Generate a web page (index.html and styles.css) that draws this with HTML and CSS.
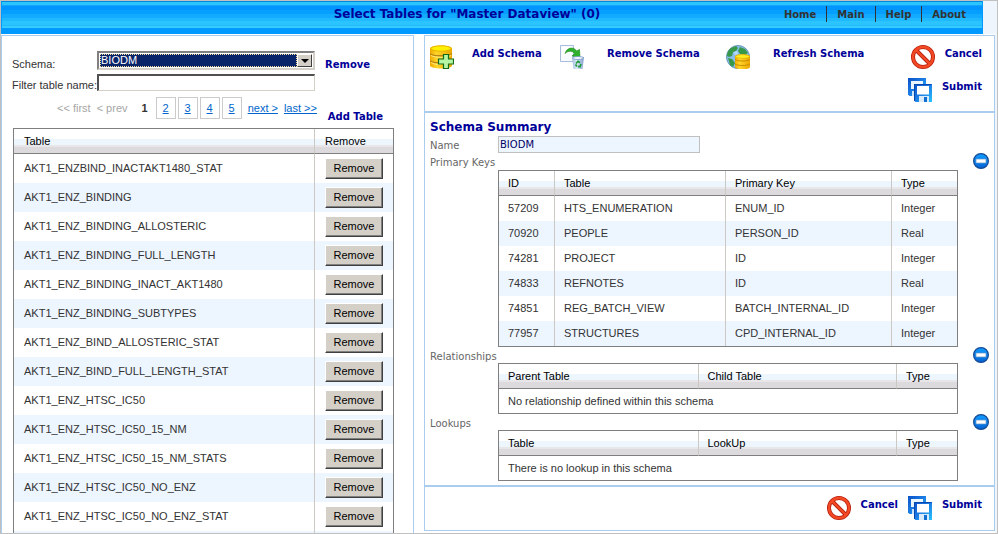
FILE: index.html
```html
<!DOCTYPE html>
<html lang="en">
<head>
<meta charset="utf-8">
<title>Select Tables</title>
<link rel="stylesheet" href="styles.css">
</head>
<body>
<svg class="defs" aria-hidden="true">
  <defs>
    <linearGradient id="gold" x1="0" x2="1" y1="0" y2="0"><stop offset="0" stop-color="#f0a800"/><stop offset=".3" stop-color="#ffd52a"/><stop offset="1" stop-color="#eda600"/></linearGradient>
    <linearGradient id="disk" x1="0" x2="1" y1="0" y2="1"><stop offset="0" stop-color="#0a50c8"/><stop offset=".5" stop-color="#1d7fe4"/><stop offset="1" stop-color="#29c4ff"/></linearGradient>
    <linearGradient id="blue" x1="0" x2="0" y1="0" y2="1"><stop offset="0" stop-color="#109bff"/><stop offset=".5" stop-color="#0a84ee"/><stop offset="1" stop-color="#0560d0"/></linearGradient>
    <linearGradient id="bin" x1="0" x2="1" y1="0" y2="0"><stop offset="0" stop-color="#9fbbe0"/><stop offset=".4" stop-color="#dce9f8"/><stop offset="1" stop-color="#7f9fd0"/></linearGradient>
    <symbol id="i-add" viewBox="0 0 24 24">
      <path d="M0 3.500C0 -.5 22 -.5 22 3.500V20.500C22 24.500 0 24.500 0 20.500Z" fill="url(#gold)"/>
      <ellipse cx="11" cy="3.500" rx="10" ry="2.700" fill="#fff000" stroke="#e8b400"/>
      <path d="M0 8.500C2 11.500 20 11.500 22 8.500M0 15.500C2 18.500 20 18.500 22 15.500" fill="none" stroke="#b98518" stroke-width="1.300"/>
      <path d="M1 10.500C5 13 17 13 21 10.500M1 17.500C5 20 9 19.500 11 19.500" fill="none" stroke="#ffe97a"/>
      <path d="M13.500 9.500h5v4.500h5v5h-5v4.500h-5V19h-5v-5h5z" fill="#b6f5a4" stroke="#146c17" stroke-width="1.200"/>
    </symbol>
    <symbol id="i-remove" viewBox="0 0 24 24">
      <path d="M.5.500h13v16H.5z" fill="#f7faff" stroke="#a8bcdc"/>
      <path d="M2 14V2h10z" fill="#fff"/>
      <path d="M5 8.500C7 2 14 1.500 16.500 6l3-1.500.500 8-8-1.500 2.500-2.500C12.500 5.500 8 5.500 5 8.500z" fill="#2fb12c" stroke="#168918" stroke-width=".6"/>
      <path d="M12 12h12l-1.500 12h-9z" fill="url(#bin)"/>
      <ellipse cx="18" cy="13" rx="5.700" ry="1.500" fill="#edf4fc" stroke="#7d99ca" stroke-width=".8"/>
      <path d="M16 18.500l2-2.200 2 1.500M21 19l-1 2.700h-2M17 21.500l-1.500-2" fill="none" stroke="#209838" stroke-width="1.700"/>
    </symbol>
    <symbol id="i-refresh" viewBox="0 0 24 24">
      <circle cx="12" cy="12" r="11.500" fill="#89bdea" stroke="#6796b4"/>
      <path d="M5 3l5-2 2 2-2 3-3 1-1 4-3 1-2-1c0-3 1-6 4-8zM14 2l5 2 3 4-3 2-5-1-2-3zM2 13l4 1 3 4-2 4-3-2z" fill="#38984a"/>
      <path d="M8 7l3-1 1 3-3 1z" fill="#b4dcf8"/>
      <path d="M9 11.500c0-3 15-3 15 0v10.500c0 3-15 3-15 0z" fill="url(#gold)"/>
      <ellipse cx="16.500" cy="11.500" rx="7" ry="1.800" fill="#ffef22" stroke="#e6b000" stroke-width=".7"/>
      <path d="M9 14.500c3 2 12 2 15 0M9 19c3 2 12 2 15 0" fill="none" stroke="#c68b00"/>
    </symbol>
    <symbol id="i-cancel" viewBox="0 0 24 24">
      <circle cx="12" cy="12" r="10" fill="#fff" stroke="#b51e0c" stroke-width="4"/>
      <path d="M5 5l14 14" stroke="#b51e0c" stroke-width="3.900"/>
      <circle cx="12" cy="12" r="10" fill="none" stroke="#f34a25" stroke-width="2.400"/>
      <path d="M5 5l14 14" stroke="#f34a25" stroke-width="2.300"/>
    </symbol>
    <symbol id="i-submit" viewBox="0 0 24 24">
      <path d="M0 0h18v18H1.500L0 16.500z" fill="url(#disk)"/>
      <path d="M3 3h12v8H3z" fill="#eaf6ff"/><path d="M4 13h5v5H4z" fill="#cbe4fa"/>
      <path d="M6 6h18v18H7.500L6 22.500z" fill="url(#disk)"/>
      <path d="M6.500 23V6.500h17" fill="none" stroke="#0747b0"/>
      <path d="M9 8h12v8.500H9z" fill="#fff"/><path d="M11 18h10v6H11z" fill="#d9eafa"/>
      <path d="M16 19h3v5h-3z" fill="#126fd2"/>
    </symbol>
    <symbol id="i-minus" viewBox="0 0 16 16">
      <circle cx="8" cy="8" r="7.400" fill="url(#blue)" stroke="#164a94" stroke-width="1.200"/>
      <path d="M3 6h10v4H3z" fill="#fff" stroke="#6494c8" stroke-width=".7"/>
    </symbol>
  </defs>
</svg>

<div class="frame">
  <header class="banner">
    <h1>Select Tables for "Master Dataview" (0)</h1>
    <nav class="menu"><a href="#">Home</a><a href="#">Main</a><a href="#">Help</a><a href="#">About</a></nav>
  </header>

  <main class="columns">
    <section class="panel picker">
      <div class="form">
        <label for="schema">Schema:</label>
        <span class="drop"><select id="schema"><option>BIODM</option></select><span class="arrow"></span></span>
        <a class="action" href="#">Remove</a>
        <label for="filter">Filter table name:</label>
        <input id="filter" class="field" type="text">
      </div>
      <div class="paging">
        <nav class="pager">
          <span class="off">&lt;&lt; first</span><span class="off">&lt; prev</span><b>1</b>
          <span class="pages"><a href="#">2</a><a href="#">3</a><a href="#">4</a><a href="#">5</a></span>
          <a href="#">next &gt;</a><a href="#">last &gt;&gt;</a>
        </nav>
        <a class="action" href="#">Add Table</a>
      </div>
      <table class="grid tall">
        <colgroup><col><col class="c-remove"></colgroup>
        <thead><tr><th>Table</th><th>Remove</th></tr></thead>
        <tbody>
          <tr><td>AKT1_ENZBIND_INACTAKT1480_STAT</td><td><button>Remove</button></td></tr>
          <tr><td>AKT1_ENZ_BINDING</td><td><button>Remove</button></td></tr>
          <tr><td>AKT1_ENZ_BINDING_ALLOSTERIC</td><td><button>Remove</button></td></tr>
          <tr><td>AKT1_ENZ_BINDING_FULL_LENGTH</td><td><button>Remove</button></td></tr>
          <tr><td>AKT1_ENZ_BINDING_INACT_AKT1480</td><td><button>Remove</button></td></tr>
          <tr><td>AKT1_ENZ_BINDING_SUBTYPES</td><td><button>Remove</button></td></tr>
          <tr><td>AKT1_ENZ_BIND_ALLOSTERIC_STAT</td><td><button>Remove</button></td></tr>
          <tr><td>AKT1_ENZ_BIND_FULL_LENGTH_STAT</td><td><button>Remove</button></td></tr>
          <tr><td>AKT1_ENZ_HTSC_IC50</td><td><button>Remove</button></td></tr>
          <tr><td>AKT1_ENZ_HTSC_IC50_15_NM</td><td><button>Remove</button></td></tr>
          <tr><td>AKT1_ENZ_HTSC_IC50_15_NM_STATS</td><td><button>Remove</button></td></tr>
          <tr><td>AKT1_ENZ_HTSC_IC50_NO_ENZ</td><td><button>Remove</button></td></tr>
          <tr><td>AKT1_ENZ_HTSC_IC50_NO_ENZ_STAT</td><td><button>Remove</button></td></tr>
          <tr><td></td><td></td></tr>
        </tbody>
      </table>
    </section>

    <div class="detail">
      <section class="panel toolbar">
        <a class="action tool near" href="#"><svg><use href="#i-add"/></svg>Add Schema</a>
        <a class="action tool" href="#"><svg><use href="#i-remove"/></svg>Remove Schema</a>
        <a class="action tool" href="#"><svg><use href="#i-refresh"/></svg>Refresh Schema</a>
        <div class="confirm">
          <a class="action" href="#"><svg><use href="#i-cancel"/></svg>Cancel</a>
          <a class="action" href="#"><svg><use href="#i-submit"/></svg>Submit</a>
        </div>
      </section>

      <section class="panel summary">
        <h2>Schema Summary</h2>
        <div class="name"><label for="name">Name</label><input id="name" type="text" value="BIODM" readonly></div>

        <div class="bar"><h3>Primary Keys</h3><button class="fold" aria-label="Collapse primary keys"><svg><use href="#i-minus"/></svg></button></div>
        <div class="inset">
          <table class="grid">
            <colgroup><col class="k-id"><col><col class="k-key"><col class="k-type"></colgroup>
            <thead><tr><th>ID</th><th>Table</th><th>Primary Key</th><th>Type</th></tr></thead>
            <tbody>
              <tr><td>57209</td><td>HTS_ENUMERATION</td><td>ENUM_ID</td><td>Integer</td></tr>
              <tr><td>70920</td><td>PEOPLE</td><td>PERSON_ID</td><td>Real</td></tr>
              <tr><td>74281</td><td>PROJECT</td><td>ID</td><td>Integer</td></tr>
              <tr><td>74833</td><td>REFNOTES</td><td>ID</td><td>Real</td></tr>
              <tr><td>74851</td><td>REG_BATCH_VIEW</td><td>BATCH_INTERNAL_ID</td><td>Integer</td></tr>
              <tr><td>77957</td><td>STRUCTURES</td><td>CPD_INTERNAL_ID</td><td>Integer</td></tr>
            </tbody>
          </table>
        </div>

        <div class="bar"><h3>Relationships</h3><button class="fold" aria-label="Collapse relationships"><svg><use href="#i-minus"/></svg></button></div>
        <div class="inset">
          <table class="grid empty">
            <colgroup><col><col><col class="r-type"></colgroup>
            <thead><tr><th>Parent Table</th><th>Child Table</th><th>Type</th></tr></thead>
            <tbody><tr><td colspan="3">No relationship defined within this schema</td></tr></tbody>
          </table>
        </div>

        <div class="bar"><h3>Lookups</h3><button class="fold" aria-label="Collapse lookups"><svg><use href="#i-minus"/></svg></button></div>
        <div class="inset">
          <table class="grid empty">
            <colgroup><col><col><col class="r-type"></colgroup>
            <thead><tr><th>Table</th><th>LookUp</th><th>Type</th></tr></thead>
            <tbody><tr><td colspan="3">There is no lookup in this schema</td></tr></tbody>
          </table>
        </div>
      </section>

      <section class="panel footer">
        <a class="action" href="#"><svg><use href="#i-cancel"/></svg>Cancel</a>
        <a class="action" href="#"><svg><use href="#i-submit"/></svg>Submit</a>
      </section>
    </div>
  </main>
</div>
</body>
</html>
```
FILE: styles.css
```css
* { box-sizing: border-box; }

body {
  margin: 0;
  background: #eef5fd;
  color: #333;
  font: 11px/16px "Liberation Sans", Arial, sans-serif;
}

h1, h2, h3 { margin: 0; }
.defs { position: absolute; width: 0; height: 0; }

.frame {
  height: 100vh;
  overflow: hidden;
  border: 1px solid #c0c0c0;
  display: flex;
  flex-direction: column;
}

/* Banner */
.banner {
  display: grid;
  grid-template-columns: 1fr auto 1fr;
  height: 33px;
  flex: none;
  margin-right: 14px;
  border-left: 1px solid #0099ff;
  border-right: 1px solid #0099ff;
  font-family: "DejaVu Sans", Verdana, sans-serif;
  background: linear-gradient(#0088dd 1px, #2cc4ff 1px 4px, #12a6ff 4px 5px, #0095ff 5px 9px, #05a0ff 9px 13px, #12abff 13px 17px, #20b8ff 17px 20px, #2cc4ff 20px 24px, #22baff 24px 25px, #36ccff 25px 27px, #0099ff 27px);
}
.banner h1 {
  grid-column: 2;
  margin-right: 50px;
  font-size: 12px;
  line-height: 27px;
  color: #000099;
}
.menu {
  display: flex;
  justify-content: flex-end;
  padding: 5px 6px 0 0;
}
.menu a {
  height: 16px;
  padding: 0 10px;
  color: #333;
  font-size: 10px;
  line-height: 18px;
  font-weight: bold;
  text-decoration: none;
}
.menu a + a { border-left: 1px solid #333; }

/* Two columns */
.columns {
  display: grid;
  grid-template-columns: 413fr 571fr;
  gap: 10px;
  flex: 1;
  min-height: 0;
  margin-right: 2px;
  padding-top: 1px;
  background: #fff;
}
.panel {
  background: #fff;
  border: 1px solid #aaccee;
}
.picker {
  min-height: 0;
  overflow: hidden;
  border-bottom: 0;
  padding: 15px 19px 0 10px;
}

.action {
  display: flex;
  gap: 10px;
  color: #000099;
  font: bold 10px/18px "DejaVu Sans", Verdana, sans-serif;
  text-decoration: none;
  white-space: nowrap;
}
.action svg { width: 24px; height: 24px; flex: none; }

.form {
  display: grid;
  grid-template-columns: 85px 218px 1fr;
  grid-template-rows: 19px 17px;
  row-gap: 4px;
}
.form label { padding-top: 5px; white-space: nowrap; }
.form label[for="filter"] { padding-top: 3px; }
.form .action { padding: 6px 0 0 10px; line-height: 16px; }
.drop {
  display: flex;
  height: 19px;
  padding: 1px;
  border: 2px solid;
  border-color: #808080 #d4d0c8 #d4d0c8 #808080;
  background: #fff;
}
.drop select {
  flex: 1;
  height: 13px;
  appearance: none;
  border: 1px dotted #f5db95;
  border-radius: 0;
  padding: 0;
  background: #0a246a;
  color: #fff;
  font: 11px/11px "Liberation Sans", Arial, sans-serif;
}
.arrow {
  display: flex;
  align-items: center;
  justify-content: center;
  width: 15px;
  background: #d4d0c8;
  border: 1px solid;
  border-color: #fff #404040 #404040 #fff;
}
.arrow::before {
  content: "";
  border: 4px solid transparent;
  border-top-color: #000;
  border-bottom: 0;
}
.field {
  width: 218px;
  height: 17px;
  border: 1px solid;
  border-width: 2px 1px 1px 2px;
  border-color: #505050 #d4d0c8 #d4d0c8 #505050;
  padding: 0 2px;
  font: inherit;
}

.paging {
  display: flex;
  justify-content: space-between;
  height: 37px;
  padding: 6px 11px 0 45px;
}
.paging .action { padding-top: 12px; line-height: 16px; }
.pager {
  display: flex;
  gap: 6px;
  line-height: 22px;
  white-space: nowrap;
}
.pager a { color: #0066cc; }
.pager b { padding: 0 2px 0 8px; }
.off { color: #a6a6a6; }
.pages { display: flex; gap: 2px; }
.pages a {
  width: 20px;
  height: 22px;
  border: 1px solid #cbcbcb;
  line-height: 20px;
  text-align: center;
}

/* Data grids */
.grid {
  width: 100%;
  table-layout: fixed;
  border-collapse: separate;
  border-spacing: 0;
  border: 1px solid #7f7f7f;
}
.grid th, .grid td {
  height: 25px;
  padding: 0 9px;
  text-align: left;
  line-height: 15px;
  white-space: nowrap;
}
.grid th {
  color: #000;
  font-weight: normal;
  border-bottom: 1px solid #7f7f7f;
  background: linear-gradient(#fff 10px, #edf5fd 10px 16px, #e9e6e9 16px 18px, #dddadd 18px);
}
.grid th + th, .grid td + td { border-left: 1px solid #ccc9c4; }
.grid tbody tr:nth-child(even) { background: #edf5ff; }
.empty td { height: 24px; }
.tall {
  width: calc(100% - 1px);
  margin-left: 1px;
}
.tall td { height: 29px; }
.tall th, .tall td { padding-left: 10px; }
.c-remove { width: 79px; }
.k-id { width: 55px; }
.k-key { width: 166px; }
.k-type { width: 66px; }
.r-type { width: 61px; }

.tall button {
  display: block;
  width: 58px;
  height: 21px;
  padding: 0;
  border: 1px solid;
  border-color: #fff #404040 #404040 #fff;
  box-shadow: inset -1px -1px #808080;
  background: #d4d0c8;
  color: #000;
  font: inherit;
}

/* Right side */
.detail { display: flex; flex-direction: column; min-width: 0; }
.toolbar {
  display: grid;
  grid-template-columns: 130px 166px 1fr auto;
  padding: 9px 12px 9px 5px;
}
.tool { gap: 23px; }
.near { gap: 18px; }
.confirm {
  display: flex;
  flex-direction: column;
  align-items: flex-end;
  gap: 9px;
}

.summary {
  padding: 6px 5px 4px 5px;
  font-family: "DejaVu Sans", Verdana, sans-serif;
}
.summary h2 {
  color: #000099;
  font-size: 12px;
  line-height: 17px;
}
.name { display: flex; height: 17px; }
.name label, .bar h3 {
  width: 68px;
  color: #666;
  font-size: 10px;
  font-weight: normal;
  line-height: 20px;
}
.name input {
  width: 202px;
  height: 17px;
  border: 1px solid #c0c0c0;
  padding: 0 1px;
  background: #edf5ff;
  color: #000066;
  font: 10px/13px "DejaVu Sans", Verdana, sans-serif;
}
.bar {
  display: flex;
  justify-content: space-between;
  height: 16px;
}
.name + .bar { height: 17px; }
.fold {
  width: 16px;
  height: 16px;
  padding: 0;
  border: 0;
  background: none;
}
.fold svg { display: block; width: 16px; height: 16px; }
.inset {
  padding: 0 31px 0 68px;
  font-family: "Liberation Sans", Arial, sans-serif;
}

.footer {
  display: flex;
  justify-content: flex-end;
  gap: 10px;
  height: 45px;
  padding: 9px 12px 0 5px;
}
```
